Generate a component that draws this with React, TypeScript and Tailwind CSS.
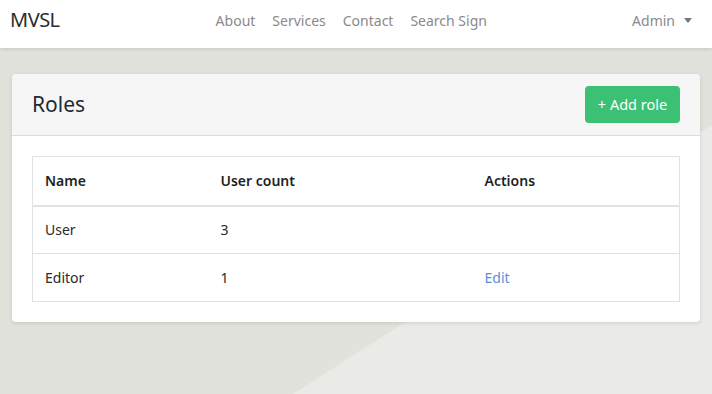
import React from "react";

export default function App() {
  const font = { fontFamily: '"Noto Sans", "Liberation Sans", sans-serif' };
  return (
    <div className="relative w-[712px] h-[394px] overflow-hidden bg-[#e2e2dc]" style={font}>
      <svg className="absolute inset-0" width="712" height="394" viewBox="0 0 712 394">
        <polygon points="293,394 712,125 712,394" fill="#eaeae6" />
      </svg>
      <div className="relative">
        <nav className="h-12 pb-[8px] bg-white shadow-[0_1px_4px_rgba(0,0,0,0.12)] flex items-center px-[10px]">
          <span className="text-[20px] text-[#2c2c2c] tracking-tight">MVSL</span>
          <div className="flex gap-[17px] ml-[156px] text-[14px] text-[#8a8a8a]">
            <span>About</span>
            <span>Services</span>
            <span>Contact</span>
            <span>Search Sign</span>
          </div>
          <div className="ml-auto mr-[10px] flex items-center gap-[9px] text-[14px] text-[#8a8a8a]">
            <span>Admin</span>
            <span className="w-0 h-0 border-l-[4px] border-r-[4px] border-t-[5px] border-l-transparent border-r-transparent border-t-[#777]" />
          </div>
        </nav>
        <div className="px-3 pt-[26px]">
          <div className="bg-white rounded-[4px] shadow-[0_1px_4px_rgba(0,0,0,0.12)] overflow-hidden">
            <div className="h-[62px] bg-[#f6f6f6] border-b border-[#dcdcdc] flex items-center justify-between pl-5 pr-5">
              <span className="text-[21px] text-[#1f2a37] mt-[1px]">Roles</span>
              <button className="h-[37px] w-[95px] rounded-[4px] bg-[#3bc173] text-white text-[14.5px]">+ Add role</button>
            </div>
            <div className="p-5">
              <table className="w-full border border-[#dee2e6] text-[14px] text-[#2a2a2a] border-collapse">
                <thead>
                  <tr className="h-[49px] border-b-2 border-[#dee2e6]">
                    <th className="w-[176px] text-left pl-[12px] font-semibold text-[#1f1f1f]">Name</th>
                    <th className="w-[264px] text-left pl-[12px] font-semibold text-[#1f1f1f]">User count</th>
                    <th className="text-left pl-[12px] font-semibold text-[#1f1f1f]">Actions</th>
                  </tr>
                </thead>
                <tbody>
                  <tr className="h-[48px] border-b border-[#dee2e6]">
                    <td className="pl-[12px]">User</td>
                    <td className="pl-[12px]">3</td>
                    <td className="pl-[12px]"></td>
                  </tr>
                  <tr className="h-[48px]">
                    <td className="pl-[12px]">Editor</td>
                    <td className="pl-[12px]">1</td>
                    <td className="pl-[12px] text-[#5a8fdc]">Edit</td>
                  </tr>
                </tbody>
              </table>
            </div>
          </div>
        </div>
      </div>
    </div>
  );
}
